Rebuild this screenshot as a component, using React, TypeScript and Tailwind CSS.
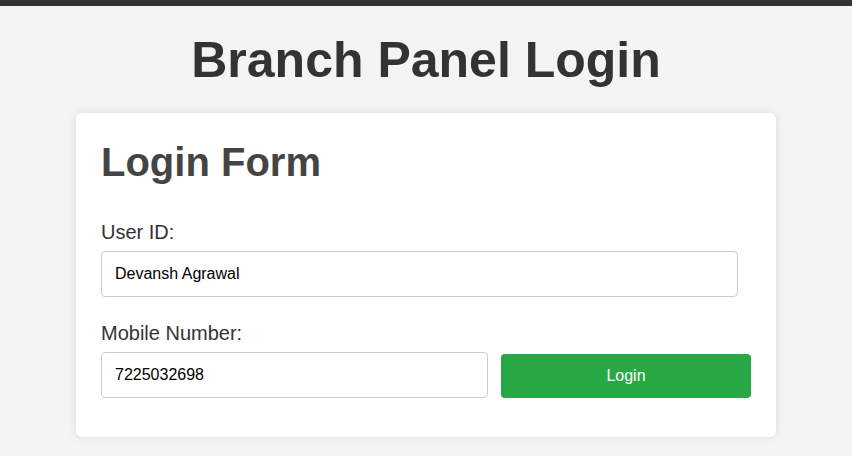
import { useState } from "react";

export default function App() {
  const [userId, setUserId] = useState("Devansh Agrawal");
  const [mobile, setMobile] = useState("7225032698");

  return (
    <div className="min-h-screen bg-[#f4f4f4] font-['Liberation_Sans',Arial,sans-serif]">
      <div className="h-[6px] bg-[#333]" />
      <h1 className="mt-[29px] mb-[28px] h-[50px] text-center text-[50px] font-bold leading-none text-[#333]">
        Branch Panel Login
      </h1>
      <div className="mx-auto w-[700px] rounded-md bg-white px-[25px] pt-[29px] pb-[39px] shadow-[0_0_10px_rgba(0,0,0,0.1)]">
        <h2 className="h-[40px] text-[40px] font-bold leading-none text-[#444]">Login Form</h2>
        <form onSubmit={(e) => e.preventDefault()}>
          <label className="mt-[40px] block h-[20px] text-[20px] leading-none text-[#333]">User ID:</label>
          <input
            value={userId}
            onChange={(e) => setUserId(e.target.value)}
            className="mt-[9px] block h-[46px] w-[637px] rounded border border-[#ccc] px-[13px] text-[16px] text-black outline-none"
          />
          <label className="mt-[26px] block h-[20px] text-[20px] leading-none text-[#333]">Mobile Number:</label>
          <div className="mt-[9px] flex items-end gap-[13px]">
            <input
              value={mobile}
              onChange={(e) => setMobile(e.target.value)}
              className="block h-[46px] w-[387px] rounded border border-[#ccc] px-[13px] text-[16px] text-black outline-none"
            />
            <button
              type="submit"
              className="h-[44px] w-[250px] rounded bg-[#28a745] text-[16px] text-white"
            >
              Login
            </button>
          </div>
        </form>
      </div>
    </div>
  );
}
